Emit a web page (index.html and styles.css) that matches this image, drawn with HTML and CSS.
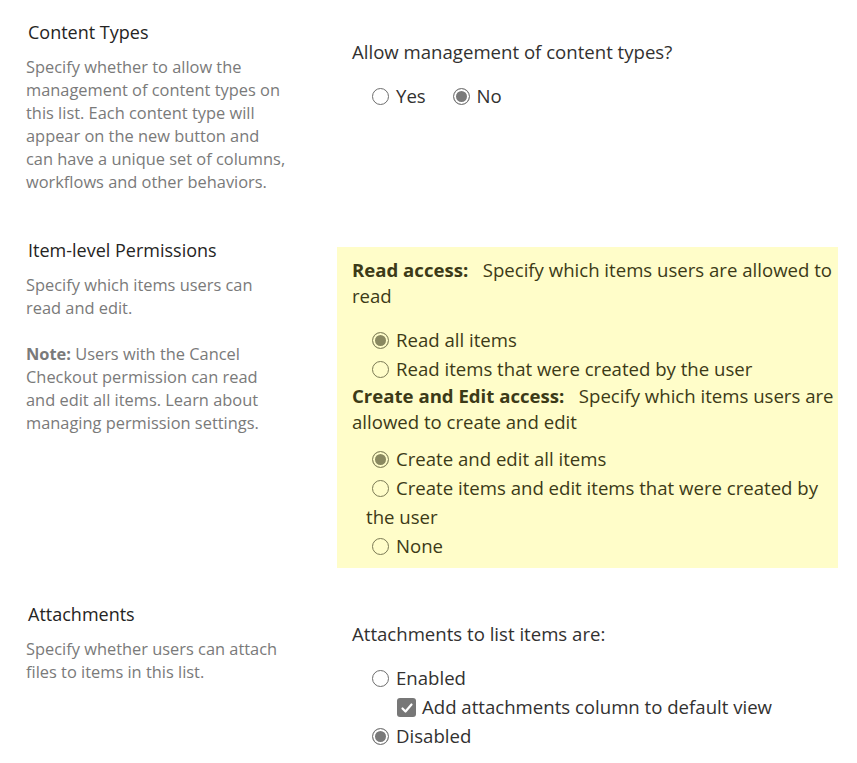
FILE: index.html
```html
<!DOCTYPE html>
<html lang="en">
<head>
  <meta charset="UTF-8">
  <meta name="viewport" content="width=device-width, initial-scale=1.0">
  <title>List Advanced Settings</title>
  <link rel="stylesheet" href="styles.css">
</head>
<body>

  <section class="setting first">
    <div class="info">
      <h2>Content Types</h2>
      <p>Specify whether to allow the management of content types on this list. Each content type will appear on the new button and can have a unique set of columns, workflows and other behaviors.</p>
    </div>
    <div class="control">
      <p class="lead">Allow management of content types?</p>
      <div class="opts inline">
        <label class="opt"><input type="radio" name="ct">Yes</label>
        <label class="opt"><input type="radio" name="ct" checked>No</label>
      </div>
    </div>
  </section>

  <section class="setting second">
    <div class="info">
      <h2>Item-level Permissions</h2>
      <p>Specify which items users can read and edit.</p>
      <p><b>Note:</b> Users with the Cancel Checkout permission can read and edit all items. Learn about managing permission settings.</p>
    </div>
    <div class="control highlight">
      <p class="lead"><b>Read access:</b>&nbsp;&nbsp; Specify which items users are allowed to read</p>
      <div class="opts">
        <label class="opt"><input type="radio" name="read" checked>Read all items</label>
        <label class="opt"><input type="radio" name="read">Read items that were created by the user</label>
      </div>
      <p class="lead"><b>Create and Edit access:</b>&nbsp;&nbsp; Specify which items users are allowed to create and edit</p>
      <div class="opts tight">
        <label class="opt"><input type="radio" name="edit" checked>Create and edit all items</label>
        <label class="opt"><input type="radio" name="edit">Create items and edit items that were created by the user</label>
        <label class="opt"><input type="radio" name="edit">None</label>
      </div>
    </div>
  </section>

  <section class="setting">
    <div class="info">
      <h2>Attachments</h2>
      <p>Specify whether users can attach files to items in this list.</p>
    </div>
    <div class="control">
      <p class="lead">Attachments to list items are:</p>
      <div class="opts">
        <label class="opt"><input type="radio" name="att">Enabled</label>
        <label class="opt sub"><input type="checkbox" checked>Add attachments column to default view</label>
        <label class="opt"><input type="radio" name="att" checked>Disabled</label>
      </div>
    </div>
  </section>

</body>
</html>
```

FILE: styles.css
```css
body {
  margin: 0;
  font-family: "Open Sans", "Noto Sans", sans-serif;
  color: #323130;
  background: #fff;
}
.setting {
  display: flex;
  align-items: flex-start;
}
.setting.first {
  padding-top: 20px;
  margin-bottom: 45px;
}
.setting.second {
  margin-bottom: 34px;
}
.info {
  width: 260px;
  margin-left: 26px;
  flex-shrink: 0;
}
.info h2 {
  font-size: 18px;
  font-weight: 400;
  line-height: 24px;
  margin: 0 0 11px 2px;
  color: #252423;
}
.info p {
  font-size: 16.4px;
  line-height: 23px;
  margin: 0;
  color: #7a7a7a;
}
.info p + p {
  margin-top: 23px;
}
.info b {
  font-weight: 700;
  color: #7a7a7a;
}
.control {
  width: 484px;
  margin: 9px 0 0 51px;
  padding: 10px 2px 8px 15px;
  font-size: 18.6px;
}
.lead {
  margin: 0;
  line-height: 26px;
}
.highlight {
  background: #fffdc9;
  color: #3c3a17;
}
.opts {
  margin-top: 16px;
  padding-left: 14px;
}
.opts.tight {
  margin-top: 9px;
}
.opt {
  display: block;
  line-height: 29px;
}
.opts.inline .opt {
  display: inline-block;
  margin-right: 16px;
}
.opt.sub {
  padding-left: 25px;
}
input[type="radio"] {
  appearance: none;
  width: 17px;
  height: 17px;
  margin: 0 7px 0 6px;
  border: 1px solid #6e6e6e;
  border-radius: 50%;
  background: #fff;
  vertical-align: -2px;
}
input[type="radio"]:checked {
  background: #7a7a7a;
  border-color: #7a7a7a;
  box-shadow: inset 0 0 0 2px #fff;
}
.highlight input[type="radio"] {
  background: transparent;
  border-color: #7b7a55;
}
.highlight input[type="radio"]:checked {
  background: #8a8960;
  border-color: #8a8960;
  box-shadow: inset 0 0 0 2px #fffdc9;
}
input[type="checkbox"] {
  appearance: none;
  width: 19px;
  height: 19px;
  margin: 0 6px 0 6px;
  border-radius: 3px;
  background: #777 no-repeat center / 14px 14px;
  background-image: url("data:image/svg+xml,%3Csvg xmlns='http://www.w3.org/2000/svg' viewBox='0 0 14 14'%3E%3Cpath d='M2.5 7.5l3 3 6-7' fill='none' stroke='%23fff' stroke-width='2.2' stroke-linecap='round' stroke-linejoin='round'/%3E%3C/svg%3E");
  vertical-align: -3px;
}
```
